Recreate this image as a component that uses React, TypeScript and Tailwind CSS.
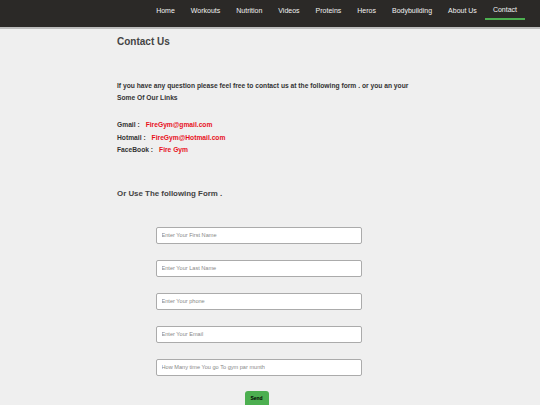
const NAV = ['Home', 'Workouts', 'Nutrition', 'Videos', 'Proteins', 'Heros', 'Bodybuilding', 'About Us', 'Contact']

const LINKS = [
  { label: 'Gmail :', value: 'FireGym@gmail.com' },
  { label: 'Hotmail :', value: 'FireGym@Hotmail.com' },
  { label: 'FaceBook :', value: 'Fire Gym' },
]

const FIELDS = [
  'Enter Your First Name',
  'Enter Your Last Name',
  'Enter Your phone',
  'Enter Your Email',
  'How Many time You go To gym par munth',
]

export default function App() {
  return (
    <div className="min-h-[405px] bg-[#efefef] font-['Liberation_Sans',Arial,sans-serif] text-[#333]">
      <nav className="flex h-[29px] justify-end border-b-2 border-[#bdbdbd] bg-[#2b2927] pr-[15px]">
        {NAV.map(item => (
          <a
            key={item}
            className={`flex h-[20px] items-center px-[8px] pt-[2px] text-[7px] text-[#f2f2f2] ${
              item === 'Contact' ? 'border-b-2 border-[#4caf50]' : ''
            }`}
          >
            {item}
          </a>
        ))}
      </nav>

      <main className="pl-[117px]">
        <h1 className="pt-[6px] text-[10px] font-bold leading-[14px] text-[#444]">Contact Us</h1>

        <p className="mt-[31px] text-[6.7px] font-bold leading-[12px] text-[#333]">
          If you have any question please feel free to contact us at the following form . or you an your
          <br />
          Some Of Our Links
        </p>

        <div className="mt-[15px] flex flex-col text-[6.7px] font-bold leading-[12.5px]">
          {LINKS.map(link => (
            <div key={link.label} className="flex gap-[6px]">
              <span className="text-[#333]">{link.label}</span>
              <span className="text-[#e8101c]">{link.value}</span>
            </div>
          ))}
        </div>

        <h2 className="mt-[31px] text-[7.9px] font-bold leading-[12px] text-[#444]">Or Use The following Form .</h2>

        <form className="mt-[27px] flex w-[283px] flex-col items-center">
          {FIELDS.map(f => (
            <input
              key={f}
              placeholder={f}
              className="mb-[16px] ml-[0px] h-[17px] w-[206px] rounded-[2px] border border-[#ababab] bg-white px-[5px] text-[5.6px] text-[#555] placeholder:text-[#888]"
            />
          ))}
          <button
            type="button"
            className="ml-[-4px] mt-[-1px] h-[17px] w-[24px] rounded-[3px] bg-[#4caf50] text-[5px] font-bold text-black"
          >
            Send
          </button>
        </form>
      </main>
    </div>
  )
}
